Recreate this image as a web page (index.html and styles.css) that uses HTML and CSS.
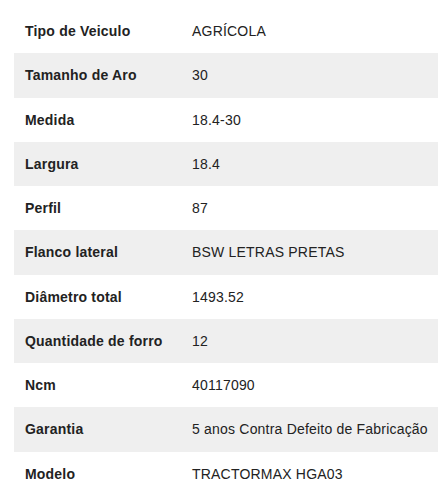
FILE: index.html
```html
<!DOCTYPE html>
<html lang="pt">
<head>
<meta charset="utf-8">
<link rel="stylesheet" href="styles.css">
</head>
<body>
<table class="specs">
<tbody>
<tr><th>Tipo de Veiculo</th><td>AGRÍCOLA</td></tr>
<tr><th>Tamanho de Aro</th><td>30</td></tr>
<tr><th>Medida</th><td>18.4-30</td></tr>
<tr><th>Largura</th><td>18.4</td></tr>
<tr><th>Perfil</th><td>87</td></tr>
<tr><th>Flanco lateral</th><td>BSW LETRAS PRETAS</td></tr>
<tr><th>Diâmetro total</th><td>1493.52</td></tr>
<tr><th>Quantidade de forro</th><td>12</td></tr>
<tr><th>Ncm</th><td>40117090</td></tr>
<tr><th>Garantia</th><td>5 anos Contra Defeito de Fabricação</td></tr>
<tr><th>Modelo</th><td>TRACTORMAX HGA03</td></tr>
</tbody>
</table>
</body>
</html>
```
FILE: styles.css
```css
html, body {
  margin: 0;
  padding: 0;
  background: #fff;
}
body {
  padding: 9px 10px 0 14px;
  font-family: "Liberation Sans", Arial, sans-serif;
  font-size: 14px;
  letter-spacing: 0.2px;
  color: #222;
}
.specs {
  width: 424px;
  table-layout: fixed;
  border-collapse: collapse;
  border-spacing: 0;
}
.specs th,
.specs td {
  height: 44.25px;
  padding: 0 11px;
  box-sizing: border-box;
  text-align: left;
  vertical-align: middle;
  line-height: 20px;
  white-space: nowrap;
}
.specs th {
  width: 167px;
  font-weight: bold;
}
.specs td {
  font-weight: normal;
}
.specs tr:nth-child(even) {
  background: #efefef;
}
```
